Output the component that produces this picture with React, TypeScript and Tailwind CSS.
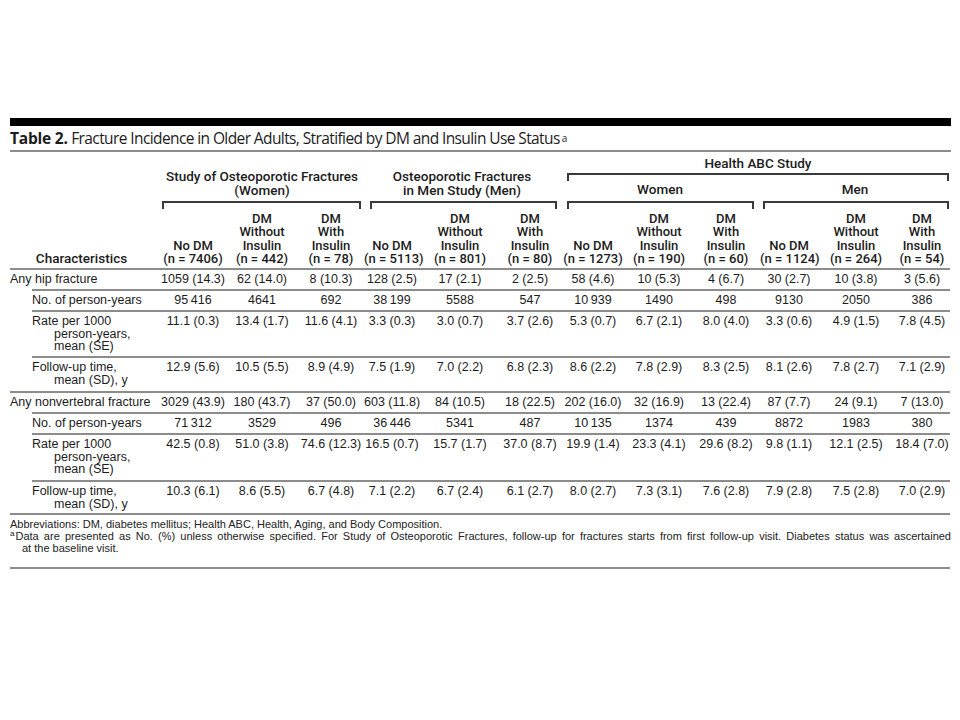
import React from "react"

const COLS = "grid-cols-[150px_66px_72px_66px_56px_80px_60px_66px_66px_68px_58px_76px_56px]"
const SUBCOLS = "grid-cols-[128px_66px_72px_66px_56px_80px_60px_66px_66px_68px_58px_76px_56px]"

type Row = {
  label: string[]
  sub: boolean
  h: string
  vals: string[]
}

const rows: Row[] = [
  {
    label: ["Any hip fracture"],
    sub: false,
    h: "h-[19px]",
    vals: ["1059 (14.3)", "62 (14.0)", "8 (10.3)", "128 (2.5)", "17 (2.1)", "2 (2.5)", "58 (4.6)", "10 (5.3)", "4 (6.7)", "30 (2.7)", "10 (3.8)", "3 (5.6)"],
  },
  {
    label: ["No. of person-years"],
    sub: true,
    h: "h-[19px]",
    vals: ["95\u2009416", "4641", "692", "38\u2009199", "5588", "547", "10\u2009939", "1490", "498", "9130", "2050", "386"],
  },
  {
    label: ["Rate per 1000", "person-years,", "mean (SE)"],
    sub: true,
    h: "h-[44px]",
    vals: ["11.1 (0.3)", "13.4 (1.7)", "11.6 (4.1)", "3.3 (0.3)", "3.0 (0.7)", "3.7 (2.6)", "5.3 (0.7)", "6.7 (2.1)", "8.0 (4.0)", "3.3 (0.6)", "4.9 (1.5)", "7.8 (4.5)"],
  },
  {
    label: ["Follow-up time,", "mean (SD), y"],
    sub: true,
    h: "h-[33px]",
    vals: ["12.9 (5.6)", "10.5 (5.5)", "8.9 (4.9)", "7.5 (1.9)", "7.0 (2.2)", "6.8 (2.3)", "8.6 (2.2)", "7.8 (2.9)", "8.3 (2.5)", "8.1 (2.6)", "7.8 (2.7)", "7.1 (2.9)"],
  },
  {
    label: ["Any nonvertebral fracture"],
    sub: false,
    h: "h-[19px]",
    vals: ["3029 (43.9)", "180 (43.7)", "37 (50.0)", "603 (11.8)", "84 (10.5)", "18 (22.5)", "202 (16.0)", "32 (16.9)", "13 (22.4)", "87 (7.7)", "24 (9.1)", "7 (13.0)"],
  },
  {
    label: ["No. of person-years"],
    sub: true,
    h: "h-[19px]",
    vals: ["71\u2009312", "3529", "496", "36\u2009446", "5341", "487", "10\u2009135", "1374", "439", "8872", "1983", "380"],
  },
  {
    label: ["Rate per 1000", "person-years,", "mean (SE)"],
    sub: true,
    h: "h-[45px]",
    vals: ["42.5 (0.8)", "51.0 (3.8)", "74.6 (12.3)", "16.5 (0.7)", "15.7 (1.7)", "37.0 (8.7)", "19.9 (1.4)", "23.3 (4.1)", "29.6 (8.2)", "9.8 (1.1)", "12.1 (2.5)", "18.4 (7.0)"],
  },
  {
    label: ["Follow-up time,", "mean (SD), y"],
    sub: true,
    h: "h-[31px]",
    vals: ["10.3 (6.1)", "8.6 (5.5)", "6.7 (4.8)", "7.1 (2.2)", "6.7 (2.4)", "6.1 (2.7)", "8.0 (2.7)", "7.3 (3.1)", "7.6 (2.8)", "7.9 (2.8)", "7.5 (2.8)", "7.0 (2.9)"],
  },
]

const groups = [
  ["No DM", "(n = 7406)"],
  ["DM", "Without", "Insulin", "(n = 442)"],
  ["DM", "With", "Insulin", "(n = 78)"],
  ["No DM", "(n = 5113)"],
  ["DM", "Without", "Insulin", "(n = 801)"],
  ["DM", "With", "Insulin", "(n = 80)"],
  ["No DM", "(n = 1273)"],
  ["DM", "Without", "Insulin", "(n = 190)"],
  ["DM", "With", "Insulin", "(n = 60)"],
  ["No DM", "(n = 1124)"],
  ["DM", "Without", "Insulin", "(n = 264)"],
  ["DM", "With", "Insulin", "(n = 54)"],
]

function Bracket({ className }: { className: string }) {
  return <div className={"h-[8px] border-t-2 border-x-2 border-[#3a3a3a] " + className} />
}

function Line({ sub }: { sub?: boolean }) {
  return <div className={"h-[2px] bg-[#8c8c8c] " + (sub ? "ml-[22px]" : "")} />
}

export default function App() {
  return (
    <div className="w-[960px] h-[720px] bg-white text-[#1c1c1c] pt-[118px] px-[10px]">
      <div className="w-[941px]">
        <div className="h-[8px] bg-black" />
        <div className="h-[24px] pt-[3px] text-[15.5px] leading-[18px] whitespace-nowrap font-['Open_Sans',sans-serif]">
          <span className="font-bold tracking-[-0.2px]">Table 2.</span>
          <span className="tracking-[-0.6px]"> Fracture Incidence in Older Adults, Stratified by DM and Insulin Use Status</span>
          <sup className="text-[10px] ml-[2px] relative top-[-2px]">a</sup>
        </div>
        <div className="h-[2px] bg-[#8c8c8c]" />
      </div>

      <div className="w-[940px] font-['Liberation_Sans',Arial,sans-serif]">
        <div className={"grid grid-rows-[21px_28px_8px_59px] font-medium text-[13.5px] font-['Roboto','Liberation_Sans',sans-serif] " + COLS}>
          <div className="col-start-8 col-span-6 row-start-1 self-center text-center leading-[14px] pl-[6px]">Health ABC Study</div>
          <Bracket className="col-start-8 col-span-6 row-start-2 ml-[7px] mr-[1px]" />
          <div className="col-start-2 col-span-3 row-start-1 row-span-2 self-end text-center leading-[13.5px] pb-[4px] whitespace-nowrap">
            <div>Study of Osteoporotic Fractures</div>
            <div>(Women)</div>
          </div>
          <div className="col-start-5 col-span-3 row-start-1 row-span-2 self-end text-center leading-[13.5px] pb-[4px] whitespace-nowrap">
            <div>Osteoporotic Fractures</div>
            <div>in Men Study (Men)</div>
          </div>
          <div className="col-start-8 col-span-3 row-start-2 self-end text-center leading-[14px] pb-[5px]">Women</div>
          <div className="col-start-11 col-span-3 row-start-2 self-end text-center leading-[14px] pb-[5px]">Men</div>
          <Bracket className="col-start-2 col-span-3 row-start-3 ml-[2px] mr-[3px]" />
          <Bracket className="col-start-5 col-span-3 row-start-3 ml-[6px] mr-[3px]" />
          <Bracket className="col-start-8 col-span-3 row-start-3 ml-[7px] mr-[6px]" />
          <Bracket className="col-start-11 col-span-3 row-start-3 ml-[3px] mr-[1px]" />
          <div className="col-start-1 row-start-4 self-end text-center pr-[7px] leading-[13.6px] pb-[2px]">Characteristics</div>
          {groups.map((g, i) => (
            <div key={i} className="row-start-4 self-end text-center whitespace-nowrap text-[13px] leading-[13.6px] pb-[2px]" style={{ gridColumnStart: i + 2 }}>
              {g.map((t, j) => (
                <div key={j}>{t}</div>
              ))}
            </div>
          ))}
        </div>

        {rows.map((r, i) => (
          <div key={i}>
            <Line sub={r.sub} />
            <div className={"grid items-start text-[12.5px] leading-[12.5px] pt-[3px] " + r.h + " " + (r.sub ? "ml-[22px] " + SUBCOLS : COLS)}>
              <div className="whitespace-nowrap">
                {r.label.map((t, j) => (
                  <div key={j} className={j > 0 ? "pl-[22px]" : ""}>{t}</div>
                ))}
              </div>
              {r.vals.map((v, j) => (
                <div key={j} className="text-center whitespace-nowrap">{v}</div>
              ))}
            </div>
          </div>
        ))}
        <Line />
        <div className="pt-[3px] pb-[13px] text-[11px] leading-[12px] text-[#222]">
          <div>Abbreviations: DM, diabetes mellitus; Health ABC, Health, Aging, and Body Composition.</div>
          <div className="whitespace-nowrap [text-align-last:justify] w-[941px]">
            <sup className="text-[8px] mr-[1px]">a</sup>Data are presented as No. (%) unless otherwise specified. For Study of Osteoporotic Fractures, follow-up for fractures starts from first follow-up visit. Diabetes status was ascertained
          </div>
          <div className="pl-[12px]">at the baseline visit.</div>
        </div>
        <Line />
      </div>
    </div>
  )
}
